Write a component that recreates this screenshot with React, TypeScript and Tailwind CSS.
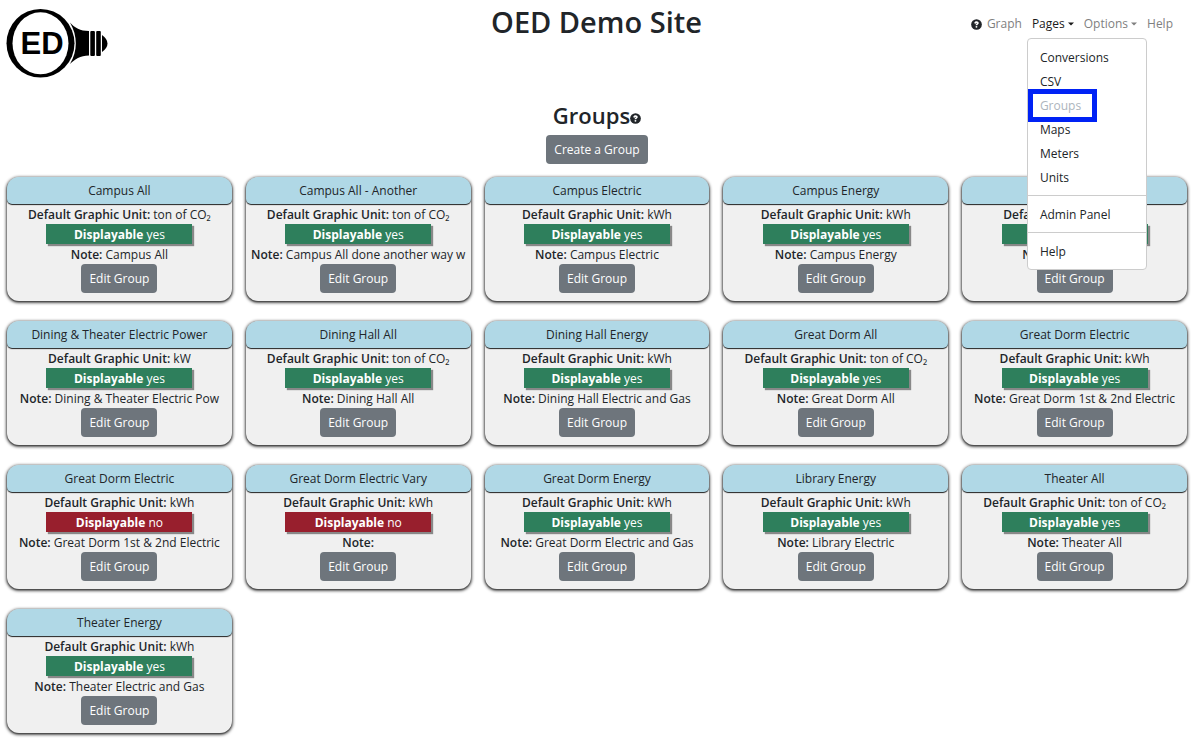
type Group = {
  name: string;
  unit: string;
  displayable: boolean;
  note: string;
};

const CO2 = 'ton of CO₂';

const groups: Group[] = [
  { name: 'Campus All', unit: CO2, displayable: true, note: 'Campus All' },
  { name: 'Campus All - Another', unit: CO2, displayable: true, note: 'Campus All done another way w' },
  { name: 'Campus Electric', unit: 'kWh', displayable: true, note: 'Campus Electric' },
  { name: 'Campus Energy', unit: 'kWh', displayable: true, note: 'Campus Energy' },
  { name: 'Campus Gas', unit: 'kW', displayable: true, note: 'Campus Gas' },
  { name: 'Dining & Theater Electric Power', unit: 'kW', displayable: true, note: 'Dining & Theater Electric Pow' },
  { name: 'Dining Hall All', unit: CO2, displayable: true, note: 'Dining Hall All' },
  { name: 'Dining Hall Energy', unit: 'kWh', displayable: true, note: 'Dining Hall Electric and Gas' },
  { name: 'Great Dorm All', unit: CO2, displayable: true, note: 'Great Dorm All' },
  { name: 'Great Dorm Electric', unit: 'kWh', displayable: true, note: 'Great Dorm 1st & 2nd Electric' },
  { name: 'Great Dorm Electric', unit: 'kWh', displayable: false, note: 'Great Dorm 1st & 2nd Electric' },
  { name: 'Great Dorm Electric Vary', unit: 'kWh', displayable: false, note: '' },
  { name: 'Great Dorm Energy', unit: 'kWh', displayable: true, note: 'Great Dorm Electric and Gas' },
  { name: 'Library Energy', unit: 'kWh', displayable: true, note: 'Library Electric' },
  { name: 'Theater All', unit: CO2, displayable: true, note: 'Theater All' },
  { name: 'Theater Energy', unit: 'kWh', displayable: true, note: 'Theater Electric and Gas' },
];

function Logo() {
  return (
    <svg viewBox="0 0 102 70" className="h-[70px] w-[102px]" role="img" aria-label="OED">
      <ellipse cx="34.5" cy="35.300" rx="34" ry="34.300" fill="#000" />
      <ellipse cx="34.5" cy="35.300" rx="28" ry="31" fill="#fff" />
      <path d="M64 14.500 C69 20 74 23 83 23 V47.500 C74 48 69 51 64 56 C71.800 43 71.800 28 64 14.500 Z" fill="#000" />
      <rect x="84.300" y="23" width="4.600" height="25" rx="1" fill="#000" />
      <rect x="90.200" y="23" width="4.600" height="25" rx="1" fill="#000" />
      <path d="M96 27 Q101.500 31 101.500 35.500 Q101.500 40 96 44 Z" fill="#000" />
      <text x="36" y="46" textAnchor="middle" className="font-['Liberation_Sans'] text-[31px] font-bold">
        ED
      </text>
    </svg>
  );
}

function HelpIcon() {
  return (
    <svg viewBox="0 0 512 512" className="inline-block size-[11px]" aria-hidden="true">
      <circle cx="256" cy="256" r="250" fill="#212529" />
      <path
        d="M150 195 C162 135 205 104 260 104 C320 104 362 142 362 191 C362 250 296 255 296 296 H214 C212 232 270 231 270 197 C270 172 232 172 220 220 Z"
        fill="#fff"
      />
      <circle cx="254" cy="366" r="44" fill="#fff" />
    </svg>
  );
}

function Caret() {
  return (
    <svg viewBox="0 0 8 4" className="ml-[3px] h-1 w-[6px]" aria-hidden="true">
      <path d="M0 0 H8 L4 4 Z" fill="currentColor" />
    </svg>
  );
}

function MenuLink({ label, active = false }: { label: string; active?: boolean }) {
  return (
    <a href="#" className={`block px-3 pt-0.5 leading-[22px] ${active ? 'text-[#adb5bd]' : 'text-[#212529]'}`}>
      {label}
    </a>
  );
}

function PagesMenu() {
  return (
    <div className="absolute top-[26px] -left-[5px] z-10 w-[120px] rounded border border-[#cccccc] bg-white py-[6px]">
      <MenuLink label="Conversions" />
      <MenuLink label="CSV" />
      <div className="relative">
        <MenuLink label="Groups" active />
        <span className="pointer-events-none absolute -top-1 left-0 h-[33px] w-[69px] border-[5px] border-[#0022f5]" />
      </div>
      <MenuLink label="Maps" />
      <MenuLink label="Meters" />
      <MenuLink label="Units" />
      <hr className="my-[6px] border-[#cccccc]" />
      <MenuLink label="Admin Panel" />
      <hr className="my-[6px] border-[#cccccc]" />
      <MenuLink label="Help" />
    </div>
  );
}

function GroupCard({ group }: { group: Group }) {
  return (
    <article className="flex flex-col items-center rounded-xl bg-[#f0f0f0] pb-2 shadow-[0_1px_3px_1px_#555555,0_1px_1px_0_#222222]">
      <h3 className="w-full rounded-t-xl rounded-b-[5px] bg-[#b0d8e6] pt-px text-center leading-[26px] shadow-[0_1px_1px_0_#222222]">
        {group.name}
      </h3>
      <p className="mt-[2px] leading-[18px]">
        <b className="font-semibold">Default Graphic Unit:</b> {group.unit}
      </p>
      <p
        className={`w-[65%] pt-0.5 text-center leading-[18px] text-white shadow-[2px_2px_1px_0_#888888] ${
          group.displayable ? 'bg-[#2e7f5c]' : 'bg-[#981f2d]'
        }`}
      >
        <b className="font-bold">Displayable</b> {group.displayable ? 'yes' : 'no'}
      </p>
      <p className="mt-[2px] leading-[18px] whitespace-nowrap">
        <b className="font-semibold">Note:</b> {group.note}
      </p>
      <button type="button" className="h-[29px] rounded bg-[#6e757c] px-2 pt-px text-white">
        Edit Group
      </button>
    </article>
  );
}

export default function App() {
  return (
    <div className="bg-white font-['Open_Sans','Noto_Sans',sans-serif] text-xs text-[#212529]">
      <header className="grid grid-cols-[1fr_auto_1fr] items-start pl-px">
        <a href="#" className="mt-2 ml-[5px] justify-self-start">
          <Logo />
        </a>
        <h1 className="text-[29px] leading-[43px] font-semibold">OED Demo Site</h1>
        <nav className="mt-3 mr-[19px] flex items-center gap-[10px] justify-self-end leading-6 text-[#7f7f7f]">
          <span className="flex items-center gap-[5px]">
            <HelpIcon />
            <a href="#">Graph</a>
          </span>
          <div className="relative">
            <button type="button" className="flex items-center text-[#1a1a1a]" aria-expanded="true">
              Pages
              <Caret />
            </button>
            <PagesMenu />
          </div>
          <button type="button" className="flex items-center">
            Options
            <Caret />
          </button>
          <a href="#">Help</a>
        </nav>
      </header>
      <main>
        <div className="mt-[22px] flex flex-col items-center pl-[2px]">
          <h2 className="mb-1 flex items-baseline text-[22px] leading-[31px] font-semibold">
            Groups
            <HelpIcon />
          </h2>
          <button type="button" className="h-[29px] rounded bg-[#6e757c] px-2 text-white">
            Create a Group
          </button>
        </div>
        <section className="mt-[13px] grid grid-cols-5 gap-x-[14px] gap-y-[20px] pr-[5px] pb-3 pl-[7px]">
          {groups.map((group, i) => (
            <GroupCard key={i} group={group} />
          ))}
        </section>
      </main>
    </div>
  );
}
